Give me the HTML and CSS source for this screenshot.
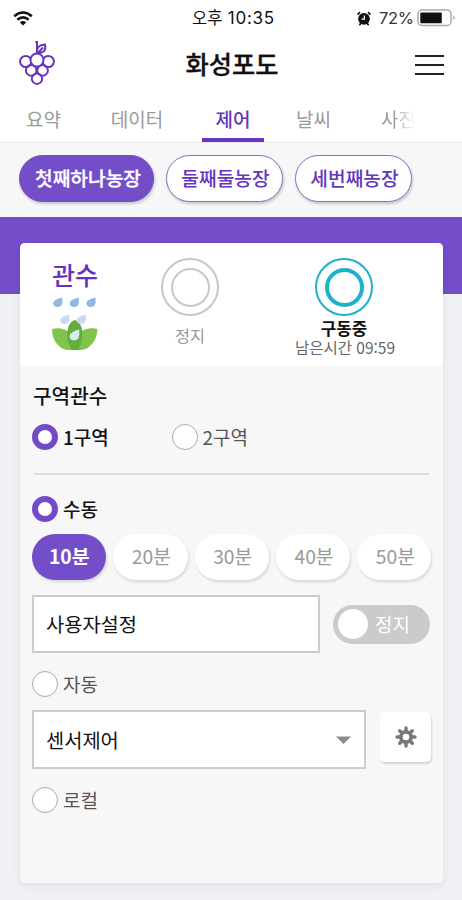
FILE: index.html
```html
<!DOCTYPE html>
<html lang="ko">
<head>
<meta charset="utf-8">
<title>화성포도</title>
<link rel="stylesheet" href="styles.css">
</head>
<body>
<div class="status">
  <svg class="wifi" width="20" height="15" viewBox="0 0 20 15" fill="none" stroke="#111" stroke-width="2.6"><path d="M1.2 5.2Q10-2.2 18.8 5.2M4.3 8.8Q10 4 15.7 8.8"/><path d="M6.9 11.4Q10 8.8 13.1 11.4L10 14.6Z" fill="#111" stroke="none"/></svg>
  <div class="time"><span>오후</span> 10:35</div>
  <div class="power">
    <svg width="14" height="15" viewBox="0 0 14 15"><circle cx="7" cy="7.8" r="5.9" fill="#111"/><path d="M.6 3.6L3 1.2M13.4 3.6L11 1.2M2.4 14.2L4 12M11.6 14.2L10 12" stroke="#111" stroke-width="1.7"/><path d="M7.4 4.5V8.2H4.6" fill="none" stroke="#fff" stroke-width="1.2"/></svg>
    <span class="percent">72%</span>
    <svg class="battery" width="39" height="18" viewBox="0 0 39 18"><rect x="1" y="1" width="33" height="15.5" rx="4" fill="#fff" stroke="#aaa" stroke-width="1.5"/><rect x="3.3" y="3.4" width="21.5" height="10.8" rx="1" fill="#111"/><path d="M36.3 6.3Q39 8.8 36.3 11.2Z" fill="#999"/></svg>
  </div>
</div>
<header class="header">
  <svg class="logo" width="36" height="44" viewBox="0 0 36 44" fill="none" stroke="#6a35bd" stroke-width="2"><circle cx="6.7" cy="20.5" r="5.6"/><circle cx="29.3" cy="20.5" r="5.6"/><circle cx="12.2" cy="29.4" r="5.3"/><circle cx="23.6" cy="29.4" r="5.3"/><circle cx="18" cy="37.7" r="5.2"/><circle cx="18" cy="19" r="6.5" fill="#fff"/><path d="M16.3 1H18V12.5M18 12Q17 4 26 3.5Q28 12 19 11.8L24 6.5"/></svg>
  <h1>화성포도</h1>
  <div class="menu"><i></i><i></i><i></i></div>
</header>
<nav class="tabs">
  <span>요약</span><span>데이터</span><span class="active">제어</span><span>날씨</span><span class="fade">사진</span>
</nav>
<div class="farms">
  <span class="farm selected">첫째하나농장</span><span class="farm">둘째둘농장</span><span class="farm">세번째농장</span>
</div>
<main class="content">
  <section class="card">
    <div class="summary">
      <div class="kind">
        <h2>관수</h2>
        <svg width="48" height="56" viewBox="0 0 48 56"><g fill="#8fb9e3"><path id="d" d="M11.2 1.5Q12.5 11 6.7 11Q2.2 11 2.2 7Q2.2 3.7 11.2 1.5Z"/><use href="#d" x="16.5"/><use href="#d" x="33.2"/></g><path d="M1 33Q11 30.5 18 36H29Q37 30.5 46.500 33Q46 44 39 50Q35 54 29 54H18Q12 54 8 50Q1 44 1 33Z" fill="#81c34c"/><path d="M23.700 24C33 27 33.500 42 27 54H20.500C14 42 15 27 23.700 24Z" fill="#62ae37"/><g fill="#c8d9f0"><use href="#d" x="7" y="17"/><use href="#d" x="23.5" y="17"/></g><path d="M28.200 33.500Q29.500 44.500 23 44.500Q18.500 44 18.500 40Q19 36 28.200 33.500Z" fill="#d5ecf3"/></svg>
      </div>
      <div class="state"><div class="ring"><i></i></div><p class="off">정지</p></div>
      <div class="state running"><div class="ring"><i></i></div><b>구동중</b><small>남은시간 09:59</small></div>
    </div>
    <div class="settings">
      <h3>구역관수</h3>
      <div class="options">
        <label class="option on"><i></i><span>1구역</span></label>
        <label class="option"><i></i><span>2구역</span></label>
      </div>
      <hr>
      <label class="option on"><i></i><span>수동</span></label>
      <div class="minutes"><span class="on">10분</span><span>20분</span><span>30분</span><span>40분</span><span>50분</span></div>
      <div class="custom"><div class="field">사용자설정</div><div class="toggle"><i></i><span>정지</span></div></div>
      <label class="option auto"><i></i><span>자동</span></label>
      <div class="sensor">
        <div class="field">센서제어<svg width="15" height="8" viewBox="0 0 15 8"><path d="M0 .5H15L7.500 8Z" fill="#8a8a8a"/></svg></div>
        <div class="gear"><svg width="22" height="22" viewBox="-11 -11 22 22"><g stroke="#777" stroke-width="3.400" stroke-linecap="round"><path d="M0-9V9M-9 0H9M-6.300-6.300L6.300 6.300M6.300-6.300L-6.300 6.300"/></g><circle r="7" fill="#777"/><circle r="3.300" fill="#fff"/></svg></div>
      </div>
      <label class="option local"><i></i><span>로컬</span></label>
    </div>
  </section>
</main>
</body>
</html>
```

FILE: styles.css
```css
* { box-sizing: border-box; }
body { margin: 0; width: 462px; height: 900px; overflow: hidden; background: #fff; color: #111; font-family: "Noto Sans CJK KR", sans-serif; font-size: 19px; line-height: 1; white-space: nowrap; }
h1, h2, h3, p { margin: 0; }
svg { display: block; flex: none; }

.status { display: grid; grid-template-columns: 180px 1fr 110px; align-items: center; height: 36px; }
.wifi { margin-left: 13px; }
.time { padding-left: 12px; font-family: Inter, "Noto Sans CJK KR", sans-serif; font-size: 17px; letter-spacing: .7px; }
.time span { font-size: 16.500px; letter-spacing: 0; }
.power { display: flex; align-items: center; padding-left: 5px; }
.percent { width: 35px; margin: 0 3px 0 8px; font-family: Inter, sans-serif; font-size: 16.500px; letter-spacing: -.3px; color: #333; }

.header { display: grid; grid-template-columns: 80px 1fr 80px; align-items: center; height: 60px; }
.logo { margin: -7px 0 0 19px; }
h1 { padding: 0 0 4px 2px; font-size: 25.300px; font-weight: 500; text-align: center; -webkit-text-stroke: .3px #111; }
.menu { display: flex; flex-direction: column; gap: 7px; margin: -2px 0 0 33px; width: 29px; }
.menu i { height: 2px; background: #222; }

.tabs { display: flex; height: 46px; padding-left: 17px; color: #999; }
.tabs span { display: flex; align-items: center; justify-content: center; width: 53px; height: 46px; padding-bottom: 2px; }
.tabs span:nth-child(2) { width: 70px; margin-left: 32px; }
.tabs .active { width: 62px; margin-left: 30px; color: #6634bd; font-weight: 500; border-bottom: 4px solid #6634bd; padding: 2px 0 0; }
.tabs span:nth-child(4) { margin-left: 23px; }
.tabs .fade { width: 34px; margin-left: 41px; justify-content: flex-start; overflow: hidden; -webkit-mask-image: linear-gradient(to right, #000 35%, transparent 100%); mask-image: linear-gradient(to right, #000 35%, transparent 100%); }

.farms { display: flex; gap: 12px; height: 75px; padding: 12px 0 0 19px; background: #f7f7f7; border-top: 1px solid #e8e8e8; }
.farm { display: flex; align-items: center; justify-content: center; width: 117px; height: 47px; padding-left: 2px; border: 1.500px solid #8672c1; border-radius: 24px; background: #fff; color: #6634bd; font-size: 19.200px; font-weight: 500; box-shadow: 1px 2px 3px #0003; }
.farm.selected { width: 135px; padding-left: 3px; background: #744dc9; border-color: #744dc9; color: #fff; -webkit-text-stroke: .3px; }

.content { height: 683px; padding: 26px 19px 0 20px; background: linear-gradient(#744dc9 77px, #f1f0f5 77px); }
.card { width: 423px; height: 640px; border-radius: 5px; overflow: hidden; background: #f7f7f7; box-shadow: 0 3px 10px #00000012; }
.summary { display: flex; height: 123px; padding-top: 15px; background: #fff; }
.kind { width: 110px; display: flex; flex-direction: column; align-items: center; }
h2 { margin-top: -1px; font-size: 25px; font-weight: 500; line-height: 34px; color: #6730be; }
.kind svg { margin-top: 5px; }
.state { width: 120px; display: flex; flex-direction: column; align-items: center; color: #c8c8c8; }
.ring { width: 58px; height: 58px; border: 2px solid; border-radius: 50%; display: flex; align-items: center; justify-content: center; }
.ring i { width: 39px; height: 39px; border: 2px solid; border-radius: 50%; }
.off { margin-top: 11px; font-size: 16.300px; color: #999; }
.running { width: 188px; color: #1cb3c8; }
.running .ring i { border-width: 4px; }
.running b { margin-top: 4px; font-size: 16.800px; line-height: 17px; color: #111; }
.running small { margin: 3px 0 0 2px; font-size: 15.500px; color: #666; }

.settings { padding: 17px 12px 0; }
h3 { font-size: 20.200px; font-weight: 500; line-height: 26px; padding-left: 1px; }
.option { display: flex; align-items: center; gap: 5px; height: 26px; color: #555; font-size: 19px; }
.option span { padding-bottom: 2px; }
.option i { width: 26px; height: 26px; border: 1.500px solid #aaa; border-radius: 50%; background: #fff; }
.option.on { color: #111; font-weight: 500; }
.option.on i { border: 6px solid #734bc8; }
.options { display: grid; grid-template-columns: 139.500px 1fr; margin-top: 15px; }
hr { height: 2px; margin: 23px 2px 21px; border: 0; background: #dedede; }
.minutes { display: flex; gap: 7px; margin: 12px 0 0; }
.minutes span { display: flex; align-items: center; justify-content: center; flex: none; width: 74.300px; height: 46px; padding-left: 2px; border-radius: 23px; background: #fff; color: #999; font-size: 19.300px; box-shadow: 1px 2px 3px #0002; }
.minutes .on { padding-left: 0; background: #744dc9; color: #fff; font-weight: 700; }
.custom { display: flex; align-items: center; justify-content: space-between; width: 398px; margin-top: 15px; }
.field { display: flex; align-items: center; justify-content: space-between; width: 288px; height: 58px; padding: 0 13px 0 12px; border: 2px solid #ccc; background: #fff; font-size: 19.800px; }
.toggle { display: flex; align-items: center; gap: 7px; width: 97px; height: 39px; padding-left: 5px; border-radius: 20px; background: #cbcbcb; color: #fff; }
.toggle span { padding-bottom: 1px; }
.toggle i { width: 30px; height: 30px; border-radius: 50%; background: #fff; }
.auto { margin-top: 18px; }
.sensor { display: flex; justify-content: space-between; width: 399px; margin-top: 13px; }
.sensor .field { width: 334px; height: 59px; }
.gear { display: flex; align-items: center; justify-content: center; width: 51px; height: 50px; margin-top: 2px; border-radius: 5px; background: #fff; box-shadow: 1px 2px 2px #0002; }
.local { margin-top: 18px; }
```
